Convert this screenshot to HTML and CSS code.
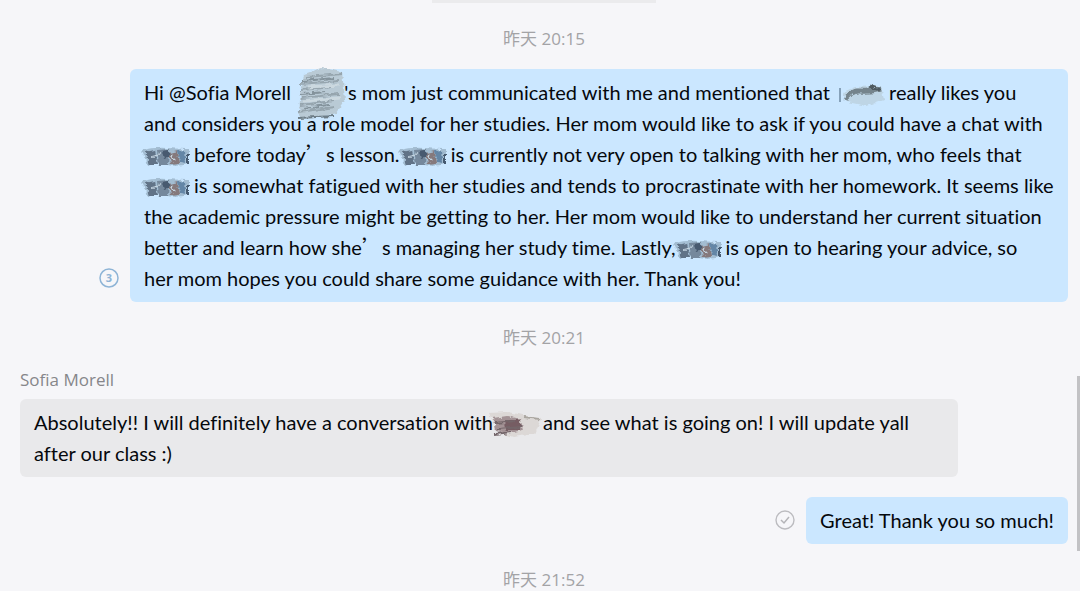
FILE: index.html
```
<!DOCTYPE html>
<html lang="en">

<head>
    <meta charset="UTF-8">
    <meta name="viewport" content="width=device-width, initial-scale=1.0">
    <title>Chat</title>
    <link rel="stylesheet" href="styles.css">
</head>

<body>
    <!-- Shared filters for the scribbled-out names -->
    <svg class="defs" width="0" height="0" aria-hidden="true">
        <filter id="rough" x="-20%" y="-20%" width="140%" height="140%" color-interpolation-filters="sRGB">
            <feTurbulence type="fractalNoise" baseFrequency="0.15 0.3" numOctaves="2" seed="4" result="noise"/>
            <feDisplacementMap in="SourceGraphic" in2="noise" scale="5" xChannelSelector="R" yChannelSelector="G"/>
            <feGaussianBlur stdDeviation="0.7"/>
        </filter>
        <symbol id="smudge" viewBox="0 0 48 22" overflow="visible">
            <g filter="url(#rough)">
                <path d="M-2 4 Q10 1 24 2 T45 3 L45 18 Q34 21 22 19 T3 20 Z" fill="#a3bdd2"/>
                <path d="M1 6 L11 4 L14 19 L5 19 Z" fill="#617387"/>
                <path d="M13 4 L25 3 L24 19 L15 19 Z" fill="#75889c"/>
                <path d="M18 5 L25 4 L26 11 L20 13 Z" fill="#485a70"/>
                <path d="M25 7 L33 5 L35 17 L27 18 Z" fill="#85797c"/>
                <path d="M33 5 L41 4 L42 17 L36 16 Z" fill="#6486a6"/>
                <path d="M8 10 L17 8 M28 9 L31 15" stroke="#c4d4e0" stroke-width="2"/>
                <path d="M44 8 V19" stroke="#465a70" stroke-width="2"/>
            </g>
        </symbol>
    </svg>

    <main class="chat">
        <div class="notice"></div>

        <time class="date">昨天 20:15</time>

        <div class="row own">
            <svg class="status" viewBox="0 0 20 20" role="img" aria-label="3 unread">
                <circle cx="10" cy="10" r="9" fill="none" stroke="#8eb4d6" stroke-width="1.5"/>
                <text x="10" y="14" class="count">3</text>
            </svg>
            <p class="bubble long">
                Hi @Sofia Morell <svg class="mask mask-tall" viewBox="0 0 48 52">
                    <g filter="url(#rough)">
                        <path d="M8 5 L26 -1 L46 3 L49 30 L40 44 L20 49 L3 50 L4 30 Z" fill="#b9cad5"/>
                        <path d="M10 8 L46 5 M3 15 L43 12 M4 21 L37 18 M5 29 L43 25 M4 36 L37 32 M3 43 L39 38" stroke="#96a5ae" stroke-width="2"/>
                        <path d="M7 12 L38 9 M5 25 L30 23 M7 39 L33 36" stroke="#84939c" stroke-width="2"/>
                        <path d="M2 49 L38 47" stroke="#6d7d87" stroke-width="2"/>
                        <path d="M12 18 L44 16 M8 32 L44 29" stroke="#cbd8df" stroke-width="3"/>
                    </g>
                </svg>'s mom just communicated with me and mentioned that <svg class="mask mask-faint" viewBox="0 0 52 22">
                    <path d="M5 4 V18" stroke="#6f8ba3" stroke-width="1.5"/>
                    <g filter="url(#rough)">
                        <path d="M8 8 L20 3 L46 2 L49 16 L32 22 L12 18 Z" fill="#bed5e5"/>
                        <path d="M11 16 Q14 6 25 7 T46 5" stroke="#75848c" stroke-width="5" fill="none"/>
                        <path d="M34 2 L45 6" stroke="#4f5a60" stroke-width="3"/>
                    </g>
                </svg>really likes you<br>
                and considers you a role model for her studies. Her mom would like to ask if you could have a chat with<br>
                <svg class="mask"><use href="#smudge" width="48" height="22"/></svg>before today<span class="wide">’</span>s lesson. <svg class="mask mask-tight"><use href="#smudge" width="48" height="22"/></svg>is currently not very open to talking with her mom, who feels that<br>
                <svg class="mask"><use href="#smudge" width="48" height="22"/></svg>is somewhat fatigued with her studies and tends to procrastinate with her homework. It seems like<br>
                the academic pressure might be getting to her. Her mom would like to understand her current situation<br>
                better and learn how she<span class="wide">’</span>s managing her study time. Lastly,<svg class="mask"><use href="#smudge" width="48" height="22"/></svg>is open to hearing your advice, so<br>
                her mom hopes you could share some guidance with her. Thank you!
            </p>
        </div>

        <time class="date">昨天 20:21</time>

        <div class="sender">Sofia Morell</div>
        <div class="row">
            <p class="bubble long">
                Absolutely!! I will definitely have a conversation with<svg class="mask mask-wide" viewBox="0 0 52 28">
                    <g filter="url(#rough)">
                        <path d="M-2 2 L18 1 L50 8 L44 23 L22 26 L5 20 Z" fill="#dcd8d6"/>
                        <path d="M2 7 L16 5 L30 8 L32 19 L18 22 L4 20 Z" fill="#a39295"/>
                        <path d="M14 9 L30 9 L30 19 L15 19 Z" fill="#765d63"/>
                        <path d="M4 12 L24 10 M7 18 L30 16 M4 23 L20 21" stroke="#74666a" stroke-width="2"/>
                        <path d="M33 6 L48 8" stroke="#aaa6a0" stroke-width="2"/>
                    </g>
                </svg>and see what is going on! I will update yall<br>
                after our class :)
            </p>
        </div>

        <div class="row own reply">
            <svg class="status" viewBox="0 0 20 20" role="img" aria-label="Read">
                <circle cx="10" cy="10" r="9" fill="none" stroke="#bcbcc0" stroke-width="1.4"/>
                <path d="M6 10 L9 13 L14 7" fill="none" stroke="#b4b4b8" stroke-width="1.5"/>
            </svg>
            <p class="bubble">Great! Thank you so much!</p>
        </div>

        <time class="date">昨天 21:52</time>
    </main>

    <div class="scroll-thumb"></div>
</body>

</html>
```
FILE: styles.css
```
body {
    font-family: "Open Sans", "Noto Sans CJK SC", sans-serif;
    margin: 0;
    height: 100vh;
    overflow: hidden;
    background-color: #f6f6f9;
    color: #05080c;
}

.defs {
    position: absolute;
}

.chat {
    display: flex;
    flex-direction: column;
    padding: 0 12px 0 20px;
}

.notice {
    width: 224px;
    height: 3px;
    margin-left: 412px;
    background-color: #ebebed;
}

.date {
    margin: 24px 0 18px;
    text-align: center;
    font-size: 17px;
    line-height: 24px;
    color: #a3a3a6;
}

.row {
    display: flex;
    align-items: flex-end;
}

.own {
    justify-content: flex-end;
    gap: 11px;
}

.bubble {
    margin: 0;
    padding: 8px 14px;
    box-sizing: border-box;
    border-radius: 6px;
    background-color: #e9e9eb;
    font-family: Lato, "Noto Sans CJK SC", sans-serif;
    font-size: 20px;
    font-variant-ligatures: none;
    line-height: 31px;
    white-space: nowrap;
}

.long {
    width: 90%;
    max-width: 938px;
}

.own .bubble {
    background-color: #cbe7ff;
}

.status {
    width: 20px;
    height: 20px;
    margin-bottom: 14px;
    flex-shrink: 0;
}

.count {
    font-size: 11px;
    font-weight: bold;
    fill: #8eb4d6;
    text-anchor: middle;
}

.mask {
    width: 48px;
    height: 22px;
    margin: -4px 2px -4px 0;
    vertical-align: middle;
    overflow: visible;
}

.mask-tall {
    width: 48px;
    height: 52px;
    margin: -16px 0;
}

.mask-faint {
    width: 52px;
}

.mask-tight {
    margin-left: -4px;
}

.mask-wide {
    width: 52px;
    height: 28px;
    margin-left: -2px;
    margin-right: 0;
}

.wide {
    font-family: "Noto Sans CJK SC", sans-serif;
    line-height: 1;
}

.sender {
    font-size: 17px;
    line-height: 24px;
    margin-bottom: 7px;
    color: #86868a;
}

.reply {
    margin-top: 20px;
}

.scroll-thumb {
    position: absolute;
    right: 0;
    top: 376px;
    width: 3px;
    height: 175px;
    background-color: #c2c2c5;
}
```
